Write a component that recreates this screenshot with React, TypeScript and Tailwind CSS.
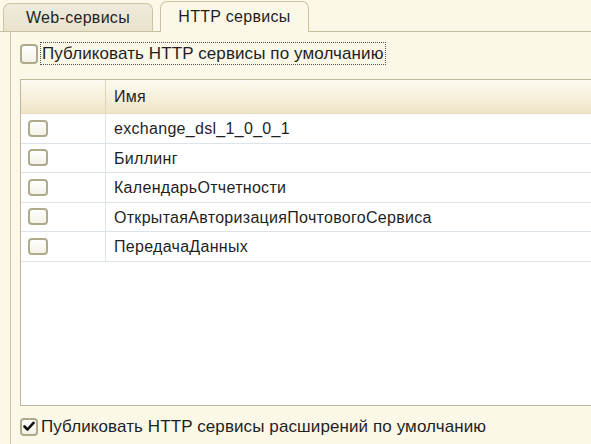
import React from 'react';

const services = [
  'exchange_dsl_1_0_0_1',
  'Биллинг',
  'КалендарьОтчетности',
  'ОткрытаяАвторизацияПочтовогоСервиса',
  'ПередачаДанных',
];

const Box: React.FC<{ checked?: boolean; className?: string }> = ({ checked, className }) => (
  <span
    className={`flex items-center justify-center rounded-[4px] border-2 border-[#b0aa8c] bg-gradient-to-b from-white to-[#f3f1e8] ${className ?? ''}`}
  >
    {checked && (
      <svg width="12" height="11" viewBox="0 0 12 11">
        <path d="M1.5 5.5 L4.5 8.5 L10.5 1.8" fill="none" stroke="#111" strokeWidth="2.6" strokeLinecap="round" strokeLinejoin="round" />
      </svg>
    )}
  </span>
);

export default function App() {
  return (
    <div className="w-[591px] h-[444px] overflow-hidden bg-[#fbf8e8] flex flex-col font-['Liberation_Sans',Arial,sans-serif] text-[16px] tracking-[0.3px] text-[#1f1f1f]">
      {/* tabs */}
      <div className="h-[32px] flex items-end gap-[7px] pl-[3px] relative z-10">
        <div className="h-[28px] w-[150px] flex items-center justify-center border border-b-0 border-[#cbc3a3] rounded-t-[7px] bg-gradient-to-b from-[#efeadb] to-[#e9e3cd] mb-[1px]">
          Web-сервисы
        </div>
        <div className="h-[31px] w-[149px] flex items-center justify-center border border-b-0 border-[#cbc3a3] rounded-t-[7px] bg-[#fbf8e8] pb-[1px]">
          HTTP сервисы
        </div>
      </div>

      <div className="flex-1 border-t border-[#c6bf9f] -mt-[1px]">
        <div className="h-full ml-[10px] border-l border-[#cbc3a3] pl-[9px] pt-[10px] flex flex-col text-[17px] tracking-[0.1px]">
          <label className="flex items-center h-[23px]">
            <Box className="w-[18px] h-[20px]" />
            <span className="ml-[2px] h-[23px] px-[1px] flex items-center border border-dotted border-[#555]">
              Публиковать HTTP сервисы по умолчанию
            </span>
          </label>

          <div className="mt-[14px] h-[327px] border border-r-0 border-[#bfb89a] bg-white flex flex-col text-[16px] tracking-[0.3px]">
            <div className="h-[34px] flex bg-gradient-to-b from-[#fdfaf0] to-[#efe6c8] border-b border-[#e3dbbd]">
              <div className="w-[85px] border-r border-[#ddd5b6]" />
              <div className="flex items-center pl-[8px] pt-[1px]">Имя</div>
            </div>
            {services.map((name) => (
              <div key={name} className="h-[29.5px] flex border-b border-[#dde3ea]">
                <div className="w-[85px] border-r border-[#dde3ea] flex items-center pl-[7px]">
                  <Box className="w-[20px] h-[17px]" />
                </div>
                <div className="flex items-center pl-[8px] pt-[2px]">{name}</div>
              </div>
            ))}
          </div>

          <label className="mt-[11px] flex items-center h-[19px]">
            <Box checked className="w-[18px] h-[18px]" />
            <span className="ml-[3px] pt-[1px]">Публиковать HTTP сервисы расширений по умолчанию</span>
          </label>
        </div>
      </div>
    </div>
  );
}
